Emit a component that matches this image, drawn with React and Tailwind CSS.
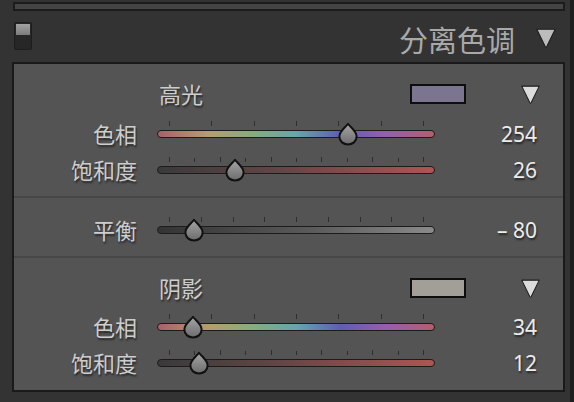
import React from 'react';

const CJK = "font-['Noto_Sans','Noto_Sans_CJK_SC',sans-serif]";
const SHADOW = '[text-shadow:1px_2px_2px_rgba(0,0,0,0.55)]';

const TRACKS = {
    hue: 'bg-[linear-gradient(to_right,#ac5e6c,#b49e6e_18%,#88ac7e_34%,#66a6ac_50%,#5e5eb4_66%,#945eb0_82%,#b45e6c)]',
    sat: 'bg-[linear-gradient(to_right,#3a3a3a,#644646_45%,#b05454)]',
    bal: 'bg-[linear-gradient(to_right,#343434,#5a5a5a_55%,#8a8a8a)]',
};

const Thumb = ({ id }) => (
    <svg width="22" height="24" viewBox="0 0 22 24">
        <defs>
            <linearGradient id={id} x1="0" y1="0" x2="0" y2="1">
                <stop offset="0" stopColor="#a6a6a6" />
                <stop offset="1" stopColor="#6c6c6c" />
            </linearGradient>
        </defs>
        <path
            d="M11 1.8 C13.5 5.5 19.6 9 19.6 14.6 C19.6 19.6 15.6 22.4 11 22.4 C6.4 22.4 2.4 19.6 2.4 14.6 C2.4 9 8.5 5.5 11 1.8 Z"
            fill={`url(#${id})`}
            stroke="#111"
            strokeWidth="2"
            strokeLinejoin="round"
        />
    </svg>
);

const Triangle = ({ fill, className }) => (
    <svg width="20" height="20" viewBox="0 0 20 20" className={className}>
        <path d="M0.8 1.2 L19.2 1.2 L10.8 18.4 Q10 19.8 9.2 18.4 Z" fill={fill} stroke="#1e1e1e" strokeWidth="1.1" strokeLinejoin="round" />
    </svg>
);

const SliderRow = ({ id, label, value, display, min, max, track, ticks }) => {
    const frac = (value - min) / (max - min);
    const tickList = Array.from({ length: ticks }, (_, i) => i);

    return (
        <div className="flex h-[36px] items-center">
            <div className={`w-[123px] text-right text-[22px] leading-none text-[#cdcdcd] ${CJK} ${SHADOW}`}>{label}</div>
            <div className="relative ml-[20px] flex h-[36px] w-[278px] items-center">
                <div className={`h-[8px] w-full rounded-full border border-[#1c1c1c] ${TRACKS[track]}`} />
                {tickList.map((i) => (
                    <span
                        key={i}
                        className={`absolute w-[1px] bg-[#2e2e2e] ${i % 2 === 0 || ticks < 10 ? 'top-[5px] h-[5px]' : 'top-[6px] h-[4px]'}`}
                        style={{ left: 12 + (254 * i) / (ticks - 1) }}
                    />
                ))}
                <div className="absolute top-[6px]" style={{ left: 12 + frac * 254 - 11 }}>
                    <Thumb id={id} />
                </div>
            </div>
            <div className={`w-[102px] text-right text-[21px] leading-none text-[#ececec] font-['Noto_Sans',sans-serif] ${SHADOW}`}>{display}</div>
        </div>
    );
};

const GroupHeader = ({ title, swatch }) => (
    <div className="flex h-[26px] items-center pl-[145px] pr-[23px]">
        <span className={`text-[22px] leading-none text-[#cdcdcd] ${CJK} ${SHADOW}`}>{title}</span>
        <div className={`ml-auto h-[20px] w-[56px] border-2 border-[#0e0e0e] ${swatch}`} />
        <Triangle fill="#dcdcdc" className="ml-[55px] h-[19px] w-[19px]" />
    </div>
);

const Divider = () => <div className="h-[2px] bg-[#474747]" />;

export default function App() {
    return (
        <div className="flex h-[402px] w-[574px] overflow-hidden bg-[#333333]">
            <div className="flex w-[570px] flex-col pl-[12px] pr-[5px]">
                <div className="ml-[1px] mt-[2px] h-[9px] border-2 border-[#1c1c1c] bg-[#444444]" />

                <div className="flex h-[51px] items-start">
                    <div className="ml-[2px] mt-[11px] flex h-[28px] w-[18px] flex-col rounded-[2px] border border-[#1d1d1d] bg-[#272727] p-[1px]">
                        <div className="h-[11px] w-full bg-[linear-gradient(to_bottom,#a2a2a2,#7c7c7c)]" />
                    </div>
                    <span className={`ml-auto mt-[15px] text-[29px] leading-none text-[#a9a9a9] ${CJK}`}>分离色调</span>
                    <Triangle fill="#bcbcbc" className="ml-[21px] mr-[9px] mt-[17px] h-[20px] w-[20px]" />
                </div>

                <section className="flex h-[330px] flex-col border-2 border-[#1a1a1a] bg-[#545454]">
                    <div className="pb-[8px] pt-[17px]">
                        <GroupHeader title="高光" swatch="bg-[#7b7590]" />
                        <div className="mt-[9px]">
                            <SliderRow id="h-hue" label="色相" value={254} display="254" min={0} max={360} track="hue" ticks={7} />
                            <SliderRow id="h-sat" label="饱和度" value={26} display="26" min={0} max={100} track="sat" ticks={11} />
                        </div>
                    </div>

                    <Divider />

                    <div className="pb-[8px] pt-[14px]">
                        <SliderRow id="bal" label="平衡" value={-80} display="– 80" min={-100} max={100} track="bal" ticks={9} />
                    </div>

                    <Divider />

                    <div className="pt-[17px]">
                        <GroupHeader title="阴影" swatch="bg-[#a29f98]" />
                        <div className="mt-[8px]">
                            <SliderRow id="s-hue" label="色相" value={34} display="34" min={0} max={360} track="hue" ticks={7} />
                            <SliderRow id="s-sat" label="饱和度" value={12} display="12" min={0} max={100} track="sat" ticks={11} />
                        </div>
                    </div>
                </section>
            </div>
            <div className="w-[4px] bg-[#1e1e1e]" />
        </div>
    );
}
